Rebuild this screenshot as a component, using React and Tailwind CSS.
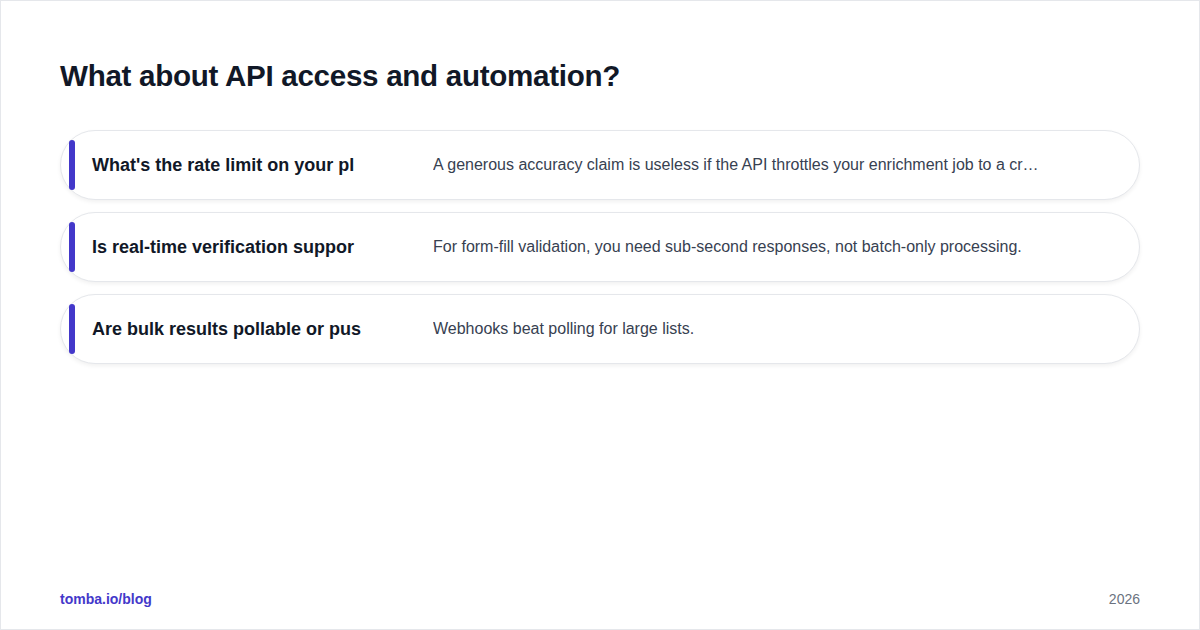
export default function App() {
  const rows = [
    ["What's the rate limit on your pl", "A generous accuracy claim is useless if the API throttles your enrichment job to a crawl during peak hours."],
    ["Is real-time verification suppor", "For form-fill validation, you need sub-second responses, not batch-only processing."],
    ["Are bulk results pollable or pus", "Webhooks beat polling for large lists."],
  ];
  return (
    <div className="w-[1200px] h-[630px] bg-white border border-[#e5e7eb] flex flex-col px-[59px] pt-[56px] pb-[19px]" style={{ fontFamily: '"Liberation Sans", Arial, sans-serif' }}>
      <h1 className="text-[29.6px] leading-[38px] font-bold text-[#111827] tracking-[-0.3px]">What about API access and automation?</h1>
      <div className="flex flex-col gap-3 mt-[35px]">
        {rows.map(([q, a]) => (
          <div key={q} className="h-[70px] rounded-full border border-[#e5e7eb] bg-white shadow-[0_2px_4px_rgba(0,0,0,0.06)] flex items-center pl-2 pr-[100px]">
            <div className="w-[6px] h-[50px] rounded-full bg-[#4338ca] shrink-0" />
            <div className="w-[310px] ml-[17px] shrink-0 whitespace-nowrap text-[18px] font-bold text-[#111827]">{q}</div>
            <div className="ml-[31px] flex-1 min-w-0 truncate text-[16px] text-[#374151]">{a}</div>
          </div>
        ))}
      </div>
      <div className="mt-auto flex justify-between items-center text-[14px]">
        <span className="font-bold text-[#4338ca]">tomba.io/blog</span>
        <span className="text-[#6b7280]">2026</span>
      </div>
    </div>
  );
}
